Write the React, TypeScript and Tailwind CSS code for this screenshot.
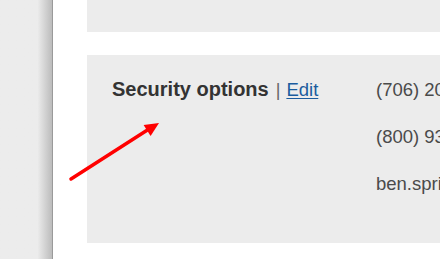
import React from "react";

export default function App() {
  return (
    <div
      className="relative flex w-[440px] h-[259px] overflow-hidden bg-[#ececec]"
      style={{ fontFamily: '"Liberation Sans", Arial, sans-serif' }}
    >
      <div className="w-[53px] shrink-0 bg-linear-to-r from-[#ececec] from-72% to-[#bcbcbc] border-r border-[#9a9a9a]" />
      <div className="flex-1 min-w-0 bg-white pl-[34px] overflow-hidden">
        <div className="w-[400px] h-[32px] bg-[#ececec]" />
        <div className="w-[400px] h-[188px] mt-[23px] bg-[#ececec] pl-[25px] pt-[11px] flex">
          <div className="w-[264px] shrink-0 leading-[47px] whitespace-nowrap">
            <span className="text-[20px] font-bold text-[#333333]">Security options</span>
            <span className="text-[18px] text-[#666666] ml-[2px]"> | </span>
            <a className="text-[18.5px] text-[#1b5c9e] underline underline-offset-2 ml-[1px]" href="#">
              Edit
            </a>
          </div>
          <div className="flex flex-col text-[18.5px] leading-[47px] text-[#4a4a4a] whitespace-nowrap">
            <div>(706) 205-5567</div>
            <div>(800) 935-1234</div>
            <div>ben.spring@example.com</div>
          </div>
        </div>
      </div>
      <svg
        className="absolute left-0 top-0 pointer-events-none"
        width="440"
        height="259"
        viewBox="0 0 440 259"
      >
        <line x1="71" y1="179" x2="149" y2="129" stroke="#ff0000" strokeWidth="3.5" strokeLinecap="round" />
        <polygon points="159,123 150.6,136 143.6,125" fill="#ff0000" />
      </svg>
    </div>
  );
}
